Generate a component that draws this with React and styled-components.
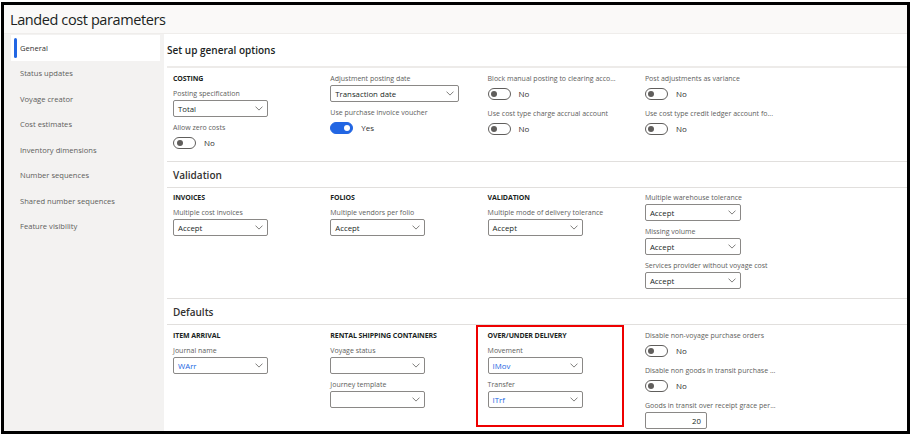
import React from "react";
import styled, { createGlobalStyle, css } from "styled-components";

const Global = createGlobalStyle`
  html, body { margin: 0; padding: 0; background: #fff; }
  body { font-family: "Open Sans", "Noto Sans", sans-serif; color: #323130; }
  * { box-sizing: border-box; }
`;

const Frame = styled.div`
  margin: 2px 3px 2px 1px;
  width: 909px;
  height: 432px;
  border: 3px solid #000;
  display: flex;
  flex-direction: column;
  background: #f3f2f1;
  overflow: hidden;
`;

const TitleBar = styled.header`
  height: 29px;
  flex: none;
  display: flex;
  align-items: center;
  padding-left: 6px;
  background: #faf9f8;
  border-bottom: 1px solid #efedeb;
`;

const Title = styled.h1`
  margin: 0;
  font-size: 14.5px;
  font-weight: 400;
  color: #201f1e;
  letter-spacing: -0.4px;
`;

const Body = styled.div`
  flex: 1;
  display: flex;
  gap: 4px;
  min-height: 0;
`;

const Nav = styled.nav`
  width: 156px;
  flex: none;
  padding: 1px 0 0 7px;
  display: flex;
  flex-direction: column;
`;

const NavItem = styled.div`
  position: relative;
  height: 25.5px;
  display: flex;
  align-items: center;
  padding-left: 9px;
  font-size: 7.6px;
  color: #605e5c;
  ${(p) =>
    p.$active &&
    css`
      background: #fff;
      color: #323130;
      &::before {
        content: "";
        position: absolute;
        left: 3px;
        top: 3px;
        bottom: 3px;
        width: 2.5px;
        border-radius: 2px;
        background: #2266e3;
      }
    `}
`;

const Content = styled.main`
  flex: 1;
  background: #fff;
  padding-left: 3px;
  display: flex;
  flex-direction: column;
`;

const PageHeader = styled.div`
  height: 34px;
  flex: none;
  display: flex;
  align-items: center;
  padding-bottom: 1px;
  font-size: 10px;
  font-weight: 600;
  color: #201f1e;
  border-bottom: 2px solid #edebe9;
`;

const GroupHeader = styled.div`
  height: 26px;
  flex: none;
  display: flex;
  align-items: center;
  padding-left: 6px;
  font-size: 10px;
  font-weight: 600;
  color: #323130;
  border-bottom: 1px solid #e1dfdd;
`;

const Group = styled.section`
  display: grid;
  grid-template-columns: repeat(4, 157.3px);
  padding: ${(p) => p.$pad || "6px 0 9px 6px"};
  border-bottom: ${(p) => (p.$last ? "none" : "1px solid #e1dfdd")};
`;

const Column = styled.div`
  position: relative;
  display: flex;
  flex-direction: column;
  gap: 6px;
  ${(p) =>
    p.$highlight &&
    css`
      &::after {
        content: "";
        position: absolute;
        left: -12px;
        top: -6px;
        width: 144px;
        height: 98px;
        border: 2px solid #ee0000;
        pointer-events: none;
      }
    `}
`;

const Heading = styled.div`
  height: 10px;
  line-height: 10px;
  margin-bottom: -1px;
  font-size: 7px;
  font-weight: 700;
  text-transform: uppercase;
  color: #201f1e;
  letter-spacing: -0.1px;
`;

const Field = styled.div`
  display: flex;
  flex-direction: column;
  gap: 1px;
`;

const Label = styled.div`
  height: 10px;
  line-height: 10px;
  font-size: 7px;
  color: #605e5c;
  white-space: nowrap;
`;

const SelectBox = styled.div`
  width: ${(p) => p.$w || 95}px;
  height: 17px;
  border: 1px solid #8a8886;
  border-radius: 2px;
  display: flex;
  align-items: center;
  justify-content: space-between;
  padding: 0 4px 0 4px;
  font-size: 7.8px;
  color: ${(p) => (p.$link ? "#2266e3" : "#201f1e")};
`;

const NumberBox = styled.div`
  width: 62px;
  height: 17px;
  border: 1px solid #8a8886;
  border-radius: 2px;
  display: flex;
  align-items: center;
  justify-content: flex-end;
  padding-right: 5px;
  font-size: 7.8px;
  color: #201f1e;
`;

const ToggleRow = styled.div`
  height: 18px;
  padding-top: 3px;
  display: flex;
  align-items: flex-start;
  gap: 8px;
  font-size: 8px;
  color: #323130;
`;

const Track = styled.span`
  position: relative;
  width: 23px;
  height: 12px;
  border-radius: 6px;
  border: 1px solid ${(p) => (p.$on ? "#2266e3" : "#605e5c")};
  background: ${(p) => (p.$on ? "#2266e3" : "#fff")};
  &::after {
    content: "";
    position: absolute;
    top: 2px;
    ${(p) => (p.$on ? "right: 2.5px;" : "left: 2.5px;")}
    width: 6px;
    height: 6px;
    border-radius: 50%;
    background: ${(p) => (p.$on ? "#fff" : "#605e5c")};
  }
`;

const ToggleText = styled.span`
  line-height: 12px;
`;

const Chevron = () => (
  <svg width="8" height="5" viewBox="0 0 8 5" fill="none">
    <path d="M0.5 0.6 L4 4.1 L7.5 0.6" stroke="#605e5c" strokeWidth="0.8" />
  </svg>
);

const Select = ({ label, value, w, link }) => (
  <Field>
    <Label>{label}</Label>
    <SelectBox $w={w} $link={link}>
      <span>{value}</span>
      <Chevron />
    </SelectBox>
  </Field>
);

const Toggle = ({ label, on }) => (
  <Field>
    <Label>{label}</Label>
    <ToggleRow>
      <Track $on={on} />
      <ToggleText>{on ? "Yes" : "No"}</ToggleText>
    </ToggleRow>
  </Field>
);

const navItems = [
  "General",
  "Status updates",
  "Voyage creator",
  "Cost estimates",
  "Inventory dimensions",
  "Number sequences",
  "Shared number sequences",
  "Feature visibility",
];

export default function App() {
  return (
    <>
      <Global />
      <Frame>
        <TitleBar>
          <Title>Landed cost parameters</Title>
        </TitleBar>
        <Body>
          <Nav>
            {navItems.map((n, i) => (
              <NavItem key={n} $active={i === 0}>
                {n}
              </NavItem>
            ))}
          </Nav>
          <Content>
            <PageHeader>Set up general options</PageHeader>
            <Group>
              <Column>
                <Heading>Costing</Heading>
                <Select label="Posting specification" value="Total" />
                <Toggle label="Allow zero costs" />
              </Column>
              <Column>
                <Select label="Adjustment posting date" value="Transaction date" w={129} />
                <Toggle label="Use purchase invoice voucher" on />
              </Column>
              <Column>
                <Toggle label="Block manual posting to clearing acco..." />
                <Toggle label="Use cost type charge accrual account" />
              </Column>
              <Column>
                <Toggle label="Post adjustments as variance" />
                <Toggle label="Use cost type credit ledger account fo..." />
              </Column>
            </Group>
            <GroupHeader>Validation</GroupHeader>
            <Group $pad="5px 0 9px 6px">
              <Column>
                <Heading>Invoices</Heading>
                <Select label="Multiple cost invoices" value="Accept" />
              </Column>
              <Column>
                <Heading>Folios</Heading>
                <Select label="Multiple vendors per folio" value="Accept" />
              </Column>
              <Column>
                <Heading>Validation</Heading>
                <Select label="Multiple mode of delivery tolerance" value="Accept" />
              </Column>
              <Column>
                <Select label="Multiple warehouse tolerance" value="Accept" w={96} />
                <Select label="Missing volume" value="Accept" w={96} />
                <Select label="Services provider without voyage cost" value="Accept" w={96} />
              </Column>
            </Group>
            <GroupHeader>Defaults</GroupHeader>
            <Group $last>
              <Column>
                <Heading>Item arrival</Heading>
                <Select label="Journal name" value="WArr" link />
              </Column>
              <Column>
                <Heading>Rental shipping containers</Heading>
                <Select label="Voyage status" value="" />
                <Select label="Journey template" value="" />
              </Column>
              <Column $highlight>
                <Heading>Over/under delivery</Heading>
                <Select label="Movement" value="IMov" link />
                <Select label="Transfer" value="ITrf" link />
              </Column>
              <Column>
                <Toggle label="Disable non-voyage purchase orders" />
                <Toggle label="Disable non goods in transit purchase ..." />
                <Field>
                  <Label>Goods in transit over receipt grace per...</Label>
                  <NumberBox>20</NumberBox>
                </Field>
              </Column>
            </Group>
          </Content>
        </Body>
      </Frame>
    </>
  );
}
